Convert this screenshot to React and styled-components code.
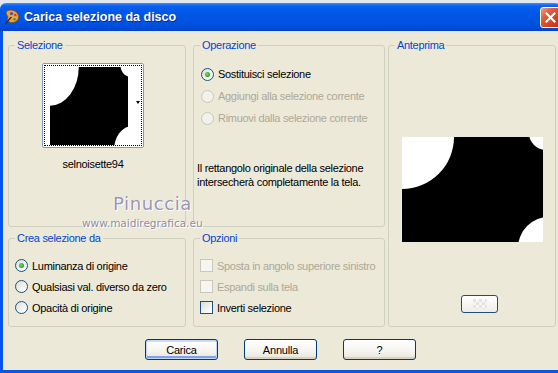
import React from "react";
import styled, { createGlobalStyle } from "styled-components";

const GlobalStyle = createGlobalStyle`
  html, body { margin: 0; padding: 0; overflow: hidden; }
  body { background: #e3e7ee; font-family: "Liberation Sans", Arial, sans-serif; }
`;

const Page = styled.div`
  padding-top: 3px;
`;

const Window = styled.div`
  position: relative;
  width: 561px;
  display: flex;
  flex-direction: column;
`;

const TitleBar = styled.div`
  height: 28px;
  display: flex;
  align-items: center;
  padding-left: 4px;
  border-radius: 6px 6px 0 0;
  background: linear-gradient(to bottom, #3d8dff 0%, #0b61f0 10%, #0058e8 30%, #0054e3 60%, #004fdc 85%, #0043c8 100%);
`;

const TitleIcon = styled.svg`
  width: 16px;
  height: 16px;
  margin-right: 4px;
  flex: none;
`;

const TitleText = styled.span`
  flex: 1;
  color: #fff;
  font-family: "Liberation Sans", Arial, sans-serif;
  font-weight: bold;
  font-size: 12.5px;
  text-shadow: 1px 1px 0 #0a2a9c;
  white-space: nowrap;
`;

const CloseButton = styled.div`
  width: 21px;
  height: 21px;
  box-sizing: border-box;
  border: 1px solid #fff;
  border-radius: 3px;
  background: linear-gradient(135deg, #f0a08a 0%, #e06040 30%, #d2461f 65%, #b83010 100%);
  display: flex;
  align-items: center;
  justify-content: center;
  flex: none;
`;

const Frame = styled.div`
  background: #ece9d8;
  border: 3px solid #0855e8;
  border-top: none;
  padding: 8px 0 10px 5px;
  display: flex;
  flex-direction: column;
  letter-spacing: -0.3px;
`;

const Grid = styled.div`
  display: grid;
  grid-template-columns: 178px 7px 192px 3px 168px;
  grid-template-rows: 188px 95px;
  row-gap: 5px;
`;

const Group = styled.fieldset`
  margin: 0;
  padding: 0;
  min-width: 0;
  border: 1px solid #d0d0bf;
  border-radius: 3px;
  grid-column: ${(p) => p.$col};
  grid-row: ${(p) => p.$row};
  display: flex;
  flex-direction: column;
`;

const Legend = styled.legend`
  color: #0046d5;
  font-size: 11px;
  line-height: 13px;
  padding: 0 2px;
  margin-left: 6px;
`;

const GroupBody = styled.div`
  display: flex;
  flex-direction: column;
  align-items: ${(p) => p.$align || "stretch"};
  padding: ${(p) => p.$pad || "0"};
`;

const Thumb = styled.div`
  width: 102px;
  height: 85px;
  box-sizing: border-box;
  border: 1px solid #7f9db9;
  border-radius: 2px;
  background: #fff;
  padding: 1px;
  margin-top: 11px;
`;

const FocusRect = styled.div`
  height: 100%;
  box-sizing: border-box;
  border: 1px dotted #000;
  display: flex;
  align-items: flex-start;
`;

const ThumbImage = styled.svg`
  width: 78px;
  height: 78px;
  margin: 1px 0 0 5px;
  display: block;
  flex: none;
`;

const ArrowCol = styled.div`
  flex: 1;
  align-self: stretch;
  display: flex;
  align-items: center;
  justify-content: flex-end;
  padding-right: 1px;
  padding-bottom: 6px;
`;

const Arrow = styled.span`
  width: 0;
  height: 0;
  border-left: 2.5px solid transparent;
  border-right: 2.5px solid transparent;
  border-top: 3px solid #000;
`;

const Caption = styled.div`
  margin-top: 10px;
  font-size: 11px;
  line-height: 13px;
  color: #000;
`;

const OptionRow = styled.label`
  height: ${(p) => p.$h || 22}px;
  display: flex;
  align-items: center;
  gap: 4px;
  font-size: 11px;
  color: ${(p) => (p.$disabled ? "#aca899" : "#000")};
  white-space: nowrap;
`;

const RadioCircle = styled.span`
  width: 13px;
  height: 13px;
  box-sizing: border-box;
  border-radius: 50%;
  border: 1px solid ${(p) => (p.$disabled ? "#cac8bb" : "#1c5180")};
  background: ${(p) =>
    p.$disabled ? "#f2f1ea" : "linear-gradient(135deg, #dcdcd5 0%, #f4f4f0 60%, #ffffff 100%)"};
  display: flex;
  align-items: center;
  justify-content: center;
  flex: none;
`;

const RadioDot = styled.span`
  width: 5px;
  height: 5px;
  border-radius: 50%;
  background: radial-gradient(circle at 40% 40%, #6ee06e, #21a121 70%, #1a8a1a);
`;

const CheckBox = styled.span`
  width: 13px;
  height: 13px;
  box-sizing: border-box;
  border: 1px solid ${(p) => (p.$disabled ? "#cac8bb" : "#1c5180")};
  background: ${(p) =>
    p.$disabled ? "#f6f5f0" : "linear-gradient(135deg, #dcdcd5 0%, #f4f4f0 60%, #ffffff 100%)"};
  flex: none;
`;

const Description = styled.p`
  margin: 32px 0 0 -4px;
  font-size: 11px;
  line-height: 14px;
  color: #000;
`;

const PreviewImage = styled.svg`
  width: 141px;
  height: 105px;
  display: block;
  margin-top: 85px;
`;

const SmallButton = styled.div`
  width: 37px;
  height: 18px;
  box-sizing: border-box;
  margin-top: 53px;
  margin-left: 15px;
  border: 1px solid #1e4d7e;
  border-radius: 3px;
  background: linear-gradient(#ffffff, #eeede6);
  display: flex;
  align-items: center;
  justify-content: center;
`;

const Checker = styled.span`
  width: 14px;
  height: 10px;
  background: repeating-conic-gradient(#f6f6f4 0 25%, #e4e4e0 0 50%) 0 0 / 6px 6px;
`;

const ButtonRow = styled.div`
  margin-top: 12px;
  display: flex;
  justify-content: center;
  gap: 26px;
  padding-right: 5px;
`;

const Button = styled.button`
  width: 73px;
  height: 21px;
  box-sizing: border-box;
  border: 1px solid #003c74;
  border-radius: 3px;
  font-family: "Liberation Sans", Arial, sans-serif;
  font-size: 11px;
  letter-spacing: -0.2px;
  color: #000;
  padding: 0;
  background: linear-gradient(#ffffff 0%, #f5f4ee 60%, #e6e3d8 100%);
  box-shadow: ${(p) =>
    p.$default
      ? "inset 0 0 0 1px #c0d6f8, inset 0 -2px 0 1px #7fa2ea, inset 0 2px 0 0 #cfe0fb"
      : "inset 0 -2px 0 0 #d8d2c4"};
`;

const Watermark = styled.div`
  position: absolute;
  left: ${(p) => p.$x}px;
  top: ${(p) => p.$y}px;
  font-family: "DejaVu Sans", Verdana, sans-serif;
  font-size: ${(p) => p.$size}px;
  line-height: ${(p) => p.$size + 2}px;
  letter-spacing: ${(p) => p.$ls}px;
  color: ${(p) => p.$color};
  text-shadow: 1px 1px 0 #ffffff, -1px 0 0 rgba(255,255,255,0.6);
  pointer-events: none;
  white-space: nowrap;
`;

const Picture = (props) => (
  <svg viewBox="0 0 141 105" preserveAspectRatio="none" {...props}>
    <rect width="141" height="105" fill="#000" />
    <circle cx="0" cy="0" r="52" fill="#fff" />
    <circle cx="144" cy="-4" r="17" fill="#fff" />
    <circle cx="147" cy="111" r="31" fill="#fff" />
  </svg>
);

const Radio = ({ checked, disabled, h, children }) => (
  <OptionRow $disabled={disabled} $h={h}>
    <RadioCircle $disabled={disabled}>{checked && <RadioDot />}</RadioCircle>
    <span>{children}</span>
  </OptionRow>
);

const Check = ({ disabled, h, children }) => (
  <OptionRow $disabled={disabled} $h={h}>
    <CheckBox $disabled={disabled} />
    <span>{children}</span>
  </OptionRow>
);

export default function App() {
  return (
    <Page>
      <GlobalStyle />
      <Window>
        <TitleBar>
          <TitleIcon viewBox="0 0 16 16">
            <path d="M4 1.5 C9 0 15 3 14.5 8.5 C14 13.5 7 15 4 12 C2 10 5 9 3.5 7 C2 5 1.5 2.5 4 1.5Z" fill="#f2a23c" stroke="#8a4a10" strokeWidth="0.8" />
            <circle cx="7.5" cy="4.5" r="1.6" fill="#2a56d6" />
            <circle cx="11.3" cy="6" r="1.3" fill="#d83a22" />
            <circle cx="10.5" cy="10.3" r="1.3" fill="#2f9e3c" />
            <path d="M1.5 14.5 L7 8.5" stroke="#5a2c0c" strokeWidth="1.6" strokeLinecap="round" />
          </TitleIcon>
          <TitleText>Carica selezione da disco</TitleText>
          <CloseButton>
            <svg width="11" height="11" viewBox="0 0 11 11">
              <path d="M1.5 1.5 L9.5 9.5 M9.5 1.5 L1.5 9.5" stroke="#fff" strokeWidth="2" strokeLinecap="square" />
            </svg>
          </CloseButton>
        </TitleBar>
        <Frame>
          <Grid>
            <Group $col={1} $row={1}>
              <Legend>Selezione</Legend>
              <GroupBody $align="center" $pad="0 8px 0 0">
                <Thumb>
                  <FocusRect>
                    <ThumbImage as={Picture} />
                    <ArrowCol>
                      <Arrow />
                    </ArrowCol>
                  </FocusRect>
                </Thumb>
                <Caption>selnoisette94</Caption>
              </GroupBody>
            </Group>

            <Group $col={3} $row={1}>
              <Legend>Operazione</Legend>
              <GroupBody $pad="11px 0 0 7px">
                <Radio checked>Sostituisci selezione</Radio>
                <Radio disabled>Aggiungi alla selezione corrente</Radio>
                <Radio disabled>Rimuovi dalla selezione corrente</Radio>
                <Description>
                  Il rettangolo originale della selezione
                  <br />
                  intersecherà completamente la tela.
                </Description>
              </GroupBody>
            </Group>

            <Group $col={5} $row="1 / span 2">
              <Legend>Anteprima</Legend>
              <GroupBody $align="center">
                <PreviewImage as={Picture} />
                <SmallButton>
                  <Checker />
                </SmallButton>
              </GroupBody>
            </Group>

            <Group $col={1} $row={2}>
              <Legend>Crea selezione da</Legend>
              <GroupBody $pad="10px 0 0 6px">
                <Radio checked h={21}>Luminanza di origine</Radio>
                <Radio h={21}>Qualsiasi val. diverso da zero</Radio>
                <Radio h={21}>Opacità di origine</Radio>
              </GroupBody>
            </Group>

            <Group $col={3} $row={2}>
              <Legend>Opzioni</Legend>
              <GroupBody $pad="10px 0 0 6px">
                <Check disabled h={21}>Sposta in angolo superiore sinistro</Check>
                <Check disabled h={21}>Espandi sulla tela</Check>
                <Check h={21}>Inverti selezione</Check>
              </GroupBody>
            </Group>
          </Grid>
          <ButtonRow>
            <Button $default>Carica</Button>
            <Button>Annulla</Button>
            <Button>?</Button>
          </ButtonRow>
        </Frame>
        <Watermark $x={113} $y={191} $size={18} $ls={0.6} $color="#9a96b6">Pinuccia</Watermark>
        <Watermark $x={82} $y={214} $size={10.5} $ls={0} $color="#8e8ea0">www.maidiregrafica.eu</Watermark>
      </Window>
    </Page>
  );
}
